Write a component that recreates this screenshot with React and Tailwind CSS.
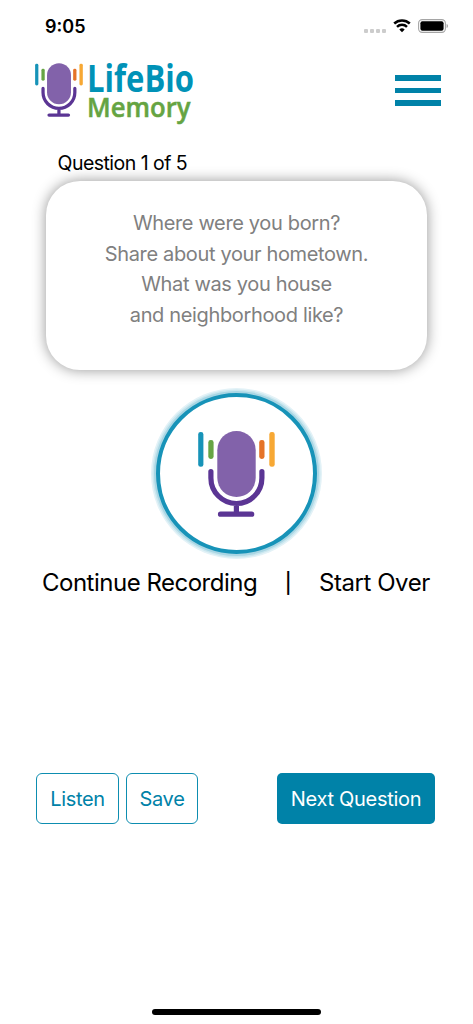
import React from "react";

const questionLines = [
  "Where were you born?",
  "Share about your hometown.",
  "What was you house",
  "and neighborhood like?",
];

const MicIcon = ({ className }) => (
  <svg viewBox="198 431 77 86" className={className} aria-hidden="true">
    <rect x="198.2" y="432" width="5.2" height="34.8" rx="2.4" fill="#1793b8" />
    <rect x="208.3" y="440" width="5.3" height="19" rx="2.4" fill="#67a544" />
    <rect x="217.3" y="431" width="38.4" height="66" rx="19.2" fill="#8262aa" />
    <rect x="259.2" y="440" width="5.3" height="19" rx="2.4" fill="#e57328" />
    <rect x="269.3" y="432" width="5.4" height="34.8" rx="2.4" fill="#f7a834" />
    <path
      d="M210.9 471.5v6.5a25.5 25.5 0 0 0 51 0v-6.5M236.4 504v10M220.5 514.2h31.2"
      fill="none"
      stroke="#5b3594"
      strokeWidth="5.2"
      strokeLinecap="round"
    />
  </svg>
);

const Logo = () => (
  <div className="flex">
    <MicIcon className="w-[48px] h-[54px]" />
    <svg
      width="108"
      height="64"
      className="ml-[4px] overflow-visible font-['Open_Sans','Noto_Sans',sans-serif]"
    >
      <text x="0" y="29" fontSize="37.5" fontWeight="700" fill="#0092b7" textLength="107" lengthAdjust="spacingAndGlyphs">
        LifeBio
      </text>
      <text x="0" y="53.5" fontSize="27.5" fontWeight="600" fill="#65a442" stroke="#65a442" strokeWidth=".5" textLength="103.5" lengthAdjust="spacingAndGlyphs">
        Memory
      </text>
    </svg>
  </div>
);

const StatusBar = () => (
  <div className="flex h-[52px] items-center justify-between pl-[45px] pr-[25px]">
    <span className="mt-px text-[18px] font-semibold leading-6">9:05</span>
    <div className="flex items-center">
      <div className="mt-[9px] flex gap-[2px]">
        <span className="h-1 w-1 rounded-[1px] bg-[#cccccc]" />
        <span className="h-1 w-1 rounded-[1px] bg-[#cccccc]" />
        <span className="h-1 w-1 rounded-[1px] bg-[#cccccc]" />
        <span className="h-1 w-1 rounded-[1px] bg-[#cccccc]" />
      </div>
      <svg width="18" height="14" viewBox="0 0 18 14" className="ml-[7px]">
        <path
          d="M1.2 4.5a11.3 11.3 0 0 1 15.6 0M4 7.8a7.2 7.2 0 0 1 10 0"
          fill="none"
          stroke="#000"
          strokeWidth="2.5"
        />
        <path d="M6.3 10.5a4 4 0 0 1 5.4 0L9 13.3Z" />
      </svg>
      <svg width="30" height="14" viewBox="0 0 30 14" className="ml-[7px]">
        <rect x=".6" y=".6" width="26.8" height="12.8" rx="3.6" fill="none" stroke="#a5a5a5" strokeWidth="1.1" />
        <rect x="2.4" y="2.2" width="23.2" height="9.6" rx="2" />
        <path d="M28.7 5c1.4.6 1.4 3.4 0 4Z" fill="#8c8c8c" />
      </svg>
    </div>
  </div>
);

const App = () => {
  return (
    <div className="flex h-[1024px] w-full flex-col overflow-hidden bg-white font-['Inter','Liberation_Sans',sans-serif] text-black">
      <StatusBar />

      {/* Header */}
      <header className="flex h-[87px] items-start justify-between pl-[35px] pr-[32px] pt-[11px]">
        <Logo />
        <button className="mt-[12px] flex w-[46px] flex-col gap-[7px]" aria-label="Menu">
          <span className="h-[5.5px] w-full bg-[#0082a8]" />
          <span className="h-[5.5px] w-full bg-[#0082a8]" />
          <span className="h-[5.5px] w-full bg-[#0082a8]" />
        </button>
      </header>

      {/* Question */}
      <p className="ml-[57.5px] mt-[12px] h-[30px] whitespace-nowrap text-[19.5px] leading-6 tracking-[-0.53px]">
        Question 1 of 5
      </p>
      <div className="ml-[46px] h-[189px] w-[381px] rounded-[34px] bg-white pt-[27px] text-center text-[20px] leading-[30.5px] tracking-[-0.35px] text-[#808080] shadow-[0_0_14px_rgba(0,0,0,0.42)]">
        {questionLines.map((line) => (
          <p key={line} className="whitespace-nowrap">
            {line}
          </p>
        ))}
      </div>

      {/* Record button */}
      <button className="ml-[156px] mt-[23px] flex h-[161px] w-[161px] shrink-0 items-center justify-center rounded-full border-[4px] border-[#1793b8] bg-white shadow-[0_0_0_2px_#a9d6e4,0_0_0_3.5px_#cbe7ef,0_0_0_5px_#e3f2f7]">
        <MicIcon className="h-[86px] w-[77px]" />
      </button>

      <div className="mt-[13px] flex h-[31px] items-center whitespace-nowrap pl-[42px] text-[24px] tracking-[-0.5px]">
        <button className="w-[215px] text-left">Continue Recording</button>
        <span className="w-[62px] text-center text-[20px] font-medium">|</span>
        <button className="tracking-[-0.45px]">Start Over</button>
      </div>

      {/* Actions */}
      <div className="mt-[175px] flex h-[51px] shrink-0 whitespace-nowrap pl-[36px] pr-[38px] text-[20px] tracking-[-0.3px]">
        <button className="w-[83px] rounded-[6px] border border-[#0d8db0] text-[#0082a8]">
          Listen
        </button>
        <button className="ml-[7px] w-[72px] rounded-[6px] border border-[#0d8db0] text-[#0082a8]">
          Save
        </button>
        <button className="ml-auto w-[158px] rounded-[5px] bg-[#0082a8] text-white">
          Next Question
        </button>
      </div>

      <div className="mx-auto mb-[9px] mt-auto h-[6px] w-[169px] rounded-full bg-black" />
    </div>
  );
};

export default App;
